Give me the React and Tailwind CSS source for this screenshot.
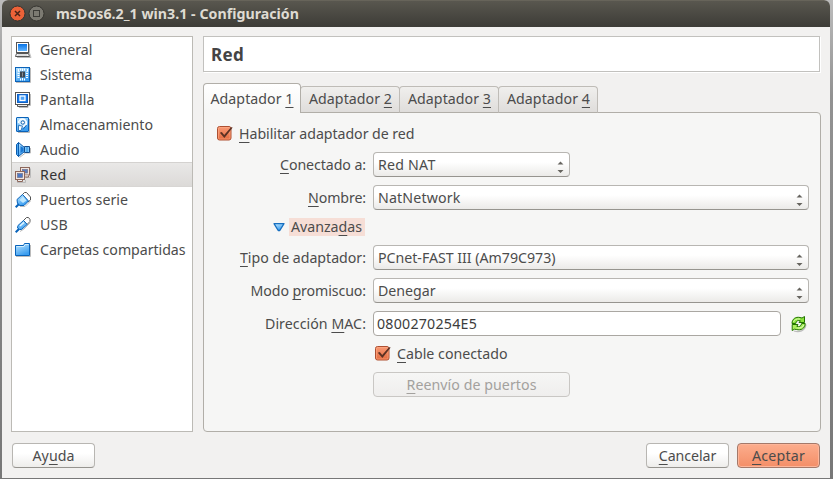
import { useLayoutEffect, useRef, useState } from "react";

/* Text set to a fixed advance width: the spacing is derived from its natural width. */
function Text({ w, className = "", children }) {
  const ref = useRef(null);
  const [spacing, setSpacing] = useState(0);
  useLayoutEffect(() => {
    const el = ref.current;
    const natural = el.getBoundingClientRect().width;
    setSpacing((w - natural) / el.textContent.length);
  }, [w]);
  return (
    <span ref={ref} className={`inline-block shrink-0 whitespace-pre ${className}`} style={{ letterSpacing: `${spacing}px` }}>
      {children}
    </span>
  );
}

/* Mnemonic letter */
function M({ children }) {
  return (
    <span className="underline decoration-1 underline-offset-[3px] [text-decoration-skip-ink:none]">{children}</span>
  );
}

function Svg({ children, className = "" }) {
  return (
    <svg viewBox="0 0 16 16" className={`h-4 w-4 shrink-0 overflow-visible ${className}`}>
      {children}
    </svg>
  );
}

const icons = {
  general: (
    <Svg>
      <path d="M14.500 2v9l1.500 4.500H2" stroke="#bbb" fill="none" />
      <rect x="1.500" y="0.500" width="12" height="10" fill="#fff" stroke="#555" />
      <rect x="3" y="2" width="9" height="7" fill="url(#screen)" />
      <path d="M1.500 11.500h12l1 3h-14z" fill="#fff" stroke="#555" />
      <path d="M2.500 13h10" stroke="#bbb" />
    </Svg>
  ),
  sistema: (
    <Svg>
      <path d="M1 15.500h14.500V1" stroke="#bbb" fill="none" />
      <rect x="0.500" y="0.500" width="14" height="14" fill="url(#blue)" stroke="#0b62b8" />
      <path d="M3.500 2v2.500h1M5.500 1.500v2M7.500 1.500v2.500M9.500 1.500v2M12.500 2v2.500h-1M2.500 6.500h2M2.500 8.500h2M2.500 10.500h2M11 6.500h2M11 8.500h2M11 10.500h2M5.500 11.500v2M7.500 11v2.500M9.500 11.500v2" stroke="#fff" fill="none" />
      <rect x="5" y="4.500" width="5" height="6" fill="#3b4751" />
      <path d="M7.500 5.500v4" stroke="#8a8f94" />
    </Svg>
  ),
  pantalla: (
    <Svg>
      <path d="M15.500 2v11.500h-2.500v2H4" stroke="#bbb" fill="none" />
      <rect x="0.500" y="0.500" width="14" height="12" fill="#fff" stroke="#555" />
      <rect x="2.500" y="2.500" width="10" height="8" fill="#1479eb" stroke="#1262c4" />
      <rect x="5" y="4" width="5" height="4.500" fill="#4ea4f8" stroke="#fff" strokeWidth="1.300" />
      <path d="M2.500 13v1.500h10V13" fill="#eee" stroke="#555" />
    </Svg>
  ),
  almacenamiento: (
    <Svg>
      <path d="M3 15.500h11.500V2" stroke="#bbb" fill="none" />
      <rect x="1.500" y="0.500" width="12" height="14" rx=".5" fill="url(#blue)" stroke="#0b62b8" />
      <path d="M3.500 6a4 4 0 1 1 8 0c0 2.500-2 3.500-4.500 4" fill="#d5eefe" stroke="#fff" strokeWidth="1.400" />
      <circle cx="7.800" cy="5.500" r="1.700" fill="#fff" stroke="#1262b0" />
      <path d="M3.500 8.500l4 .5-1.500 4.500H3.500z" fill="#fff" stroke="#1262b0" strokeWidth=".8" />
      <path d="M11.500 8L8 12.500" stroke="#1262b0" />
    </Svg>
  ),
  audio: (
    <Svg>
      <path d="M4.500 15.500l6-4.500h5V6" stroke="#bbb" fill="none" />
      <path d="M1.500 2.500l2-2v14l-2-2z" fill="#4aa8f4" stroke="#0b5bac" />
      <path d="M3.500 .5L9.500 5.500v4l-6 5z" fill="url(#blue)" stroke="#0b5bac" />
      <path d="M5.500 4v7l3-2V6z" fill="#1976d2" />
      <path d="M9.500 4.500h5v6h-5z" fill="#7cc8fb" stroke="#164f8f" />
      <path d="M12 5v5" stroke="#2788de" />
    </Svg>
  ),
  red: (
    <Svg>
      <path d="M11 10.500h4.500V1.500M2 15.500h8.500V13" stroke="#bbb" fill="none" />
      <rect x="5.500" y=".5" width="9" height="7.500" fill="#f1e6e0" stroke="#8d675b" />
      <rect x="7.500" y="2.500" width="5" height="3.500" fill="#5c7fc0" stroke="#6d718e" strokeWidth=".7" />
      <path d="M9 8.500v1.500h4.500V8.500" fill="#eee" stroke="#8d675b" />
      <rect x=".5" y="4.500" width="9" height="8" fill="#f1e6e0" stroke="#8d675b" />
      <rect x="2.500" y="6.500" width="5" height="4" fill="#4c78c4" stroke="#6d718e" strokeWidth=".7" />
      <path d="M2.500 13v1.500h5V13" fill="#eee" stroke="#8d675b" />
    </Svg>
  ),
  serie: (
    <Svg>
      <path d="M5 14.500h5l5.500-5.500" stroke="#bbb" fill="none" />
      <path d="M7.500 2.500l2-2h2l4 4.500v3L13 10z" fill="#fff" stroke="#555" />
      <path d="M2 7.500L7.500 2.500l6 6.500-4.500 4.500H4.500L2.500 11.500z" fill="url(#blue)" stroke="#0863ba" />
      <path d="M4.500 8l3.500-3.500 3.500 4-3.500 2.500z" fill="#bfe7fe" />
      <path d="M.7 15.300L4 12" stroke="#0863ba" strokeWidth="2" />
    </Svg>
  ),
  usb: (
    <Svg>
      <path d="M5 14.500l4-2.500 6.500-6.500" stroke="#bbb" fill="none" />
      <path d="M8.500 3.500l3-3h2l1.500 2v2L12 7.500z" fill="#fff" stroke="#555" />
      <path d="M3 8.500L8.500 3.500l3.700 4-5.700 5H4.500L2.500 11z" fill="url(#blue)" stroke="#0863ba" />
      <path d="M5 9l4-3.500" stroke="#e2f5ff" strokeWidth="1.300" />
      <path d="M.7 15.300L4 12" stroke="#0863ba" strokeWidth="2" />
    </Svg>
  ),
  carpetas: (
    <Svg>
      <path d="M1 14.500h14.500V3" stroke="#bbb" fill="none" />
      <path d="M.5 3.500h8l1-2h5v12H.5z" fill="url(#blue)" stroke="#0863ba" />
      <path d="M1.500 4.500h7.500l1-2H13.500" stroke="#d2eeff" fill="none" />
    </Svg>
  ),
};

const sections = [
  ["General", 52.5, "general"],
  ["Sistema", 52.5, "sistema"],
  ["Pantalla", 54.5, "pantalla"],
  ["Almacenamiento", 113, "almacenamiento"],
  ["Audio", 39.5, "audio"],
  ["Red", 26.5, "red"],
  ["Puertos serie", 88, "serie"],
  ["USB", 28, "usb"],
  ["Carpetas compartidas", 145.5, "carpetas"],
];

function Checkbox() {
  return (
    <Svg>
      <rect x=".5" y=".5" width="13.500" height="13.500" rx="2" fill="url(#check)" stroke="#ad5032" />
      <rect x="1.500" y="1.500" width="11.500" height="11.500" rx="1" fill="none" stroke="#ffab87" strokeOpacity=".6" />
      <path d="M2.800 6.700l2-.7 2.400 3L14 1.200l1.700.4L7.400 12z" fill="#5b3123" />
    </Svg>
  );
}

function Combo({ label, w, wide }) {
  return (
    <div className={`flex h-[25px] shrink-0 items-center justify-between rounded-[4px] border border-[#b8b6b2] border-b-[#96948f] bg-linear-to-b from-white from-40% to-[#ebeae8] pr-[5px] pl-1 ${wide ? "w-[436px]" : "w-[197px]"}`}>
      <Text w={w}>{label}</Text>
      <svg viewBox="0 0 7 12" className="mt-[5px] h-3 w-[7px]" fill="#66645f">
        <path d="M.5 3.500L3.500 .5l3 3zM.5 9h6L3.500 12z" />
      </svg>
    </div>
  );
}

function Row({ label, w, children, className = "" }) {
  return (
    <div className={`flex h-[25px] items-center ${className}`}>
      <div className="mr-[7px] flex w-[162px] shrink-0 justify-end">
        <Text w={w}>{label}</Text>
      </div>
      {children}
    </div>
  );
}

function Button({ children, w, primary }) {
  return (
    <button
      className={`flex h-[25px] w-[83px] items-center justify-center rounded-[4px] border ${
        primary
          ? "border-[#a4796a] bg-linear-to-b from-[#fcad8d] to-[#f38e67] shadow-[inset_0_0_0_1px_#fdb599]"
          : "border-[#b8b6b2] border-b-[#96948f] bg-linear-to-b from-white from-40% to-[#eeedeb]"
      }`}
    >
      <Text w={w}>{children}</Text>
    </button>
  );
}

function Tab({ n }) {
  return (
    <div className="-ml-px flex h-[27px] w-[100px] items-center justify-center rounded-t-[4px] border border-[#bfbcb7] border-b-[#b1aea8] bg-linear-to-b from-[#f0efed] to-[#dfdddb] pb-px pl-px">
      <Text w={83}>Adaptador <M>{n}</M></Text>
    </div>
  );
}

export default function App() {
  return (
    <div className="h-[479px] w-[833px] overflow-hidden bg-linear-to-b from-[#bcbcbc] via-[#929292] via-20% to-[#777] pr-[3px] pb-px pl-[2px] font-['Noto_Sans',sans-serif] text-[14.2px] leading-[20px] text-[#4c4c4c]">
      <svg className="absolute h-0 w-0">
        <defs>
          <linearGradient id="blue" x2=".5" y2="1"><stop stopColor="#c2e9ff" /><stop offset="1" stopColor="#3a9df0" /></linearGradient>
          <linearGradient id="screen" x2="0" y2="1"><stop stopColor="#0873e6" /><stop offset="1" stopColor="#61b5ff" /></linearGradient>
          <linearGradient id="check" x2="0" y2="1"><stop stopColor="#f99b76" /><stop offset="1" stopColor="#e36b3f" /></linearGradient>
        </defs>
      </svg>
      <div className="flex h-[478px] w-[828px] flex-col overflow-hidden rounded-t-[6px] bg-[#f2f1f0]">
        <header className="flex h-[27px] shrink-0 items-center border-t border-[#67645a] bg-linear-to-b from-[#59574f] to-[#3d3c37] pl-[7px] text-[#dfdbd2]">
          <svg viewBox="0 0 36 18" className="mr-[11px] h-[18px] w-9">
            <circle cx="8.500" cy="8.500" r="7.500" fill="#ec6238" stroke="#35342f" />
            <path d="M6 6l5 5M11 6l-5 5" stroke="#4a2418" strokeWidth="1.500" />
            <circle cx="27.500" cy="8.500" r="7.500" fill="#7c7a72" stroke="#35342f" />
            <rect x="24.500" y="5.500" width="6" height="6" fill="none" stroke="#3c3b37" />
          </svg>
          <Text w={243} className="font-bold">msDos6.2_1 win3.1 - Configuración</Text>
        </header>

        <main className="flex h-[405px] shrink-0 pt-[9px] pl-[9px]">
          <nav className="mr-[10px] h-[396px] w-[182px] shrink-0 border border-[#bcbab5] bg-white">
            {sections.map(([name, w, icon]) => (
              <div
                key={name}
                className={`flex h-[25px] items-center gap-[9px] pl-[3px] ${
                  name === "Red" ? "border-y border-t-[#d4d2d0] border-b-[#d8d6d4] bg-linear-to-b from-[#e9e8e7] to-[#dcdad8] text-[#333]" : ""
                }`}
              >
                {icons[icon]}
                <Text w={w}>{name}</Text>
              </div>
            ))}
          </nav>

          <section className="w-[618px]">
            <h1 className="flex h-9 w-[617px] items-center border border-[#c2c1be] bg-white pt-[2px] pl-[7px] text-[17px] font-bold text-[#444] shadow-[1px_1px_0_#fff]">
              <Text w={33}>Red</Text>
            </h1>

            <div className="mt-[11px] flex h-[29px] items-end">
              <div className="z-10 -mb-px flex h-[30px] w-[98px] items-center justify-center rounded-t-[4px] border border-b-0 border-[#b1aea8] bg-linear-to-b from-white to-[#f6f6f5]">
                <Text w={83}>Adaptador <M>1</M></Text>
              </div>
              <div className="-mb-px flex">
                <Tab n="2" />
                <Tab n="3" />
                <Tab n="4" />
              </div>
            </div>

            <div className="h-[320px] rounded-b-[4px] rounded-tr-[4px] border border-[#b1aea8] bg-[#f6f6f5] pt-[12px]">
              <div className="flex h-[18px] items-center gap-[6px] pl-[13px]">
                <Checkbox />
                <Text w={175.500}><M>H</M>abilitar adaptador de red</Text>
              </div>
              <Row label={<><M>C</M>onectado a:</>} w={86} className="mt-[9px]">
                <Combo label="Red NAT" w={57.500} />
              </Row>
              <Row label={<><M>N</M>ombre:</>} w={58} className="mt-[8px]">
                <Combo label="NatNetwork" w={82.500} wide />
              </Row>
              <div className="mt-[8px] flex h-[18px] items-center pl-[69px]">
                <svg viewBox="0 0 12 9" className="mr-[4px] h-[9px] w-3">
                  <path d="M1 .7h10L6.800 7.500H5.200z" fill="url(#blue)" stroke="#176fc0" strokeWidth="1.300" strokeLinejoin="round" />
                </svg>
                <div className="flex h-[18px] w-[76px] items-center bg-[#f6ded6] pl-[2px]">
                  <Text w={71}>Avanza<M>d</M>as</Text>
                </div>
              </div>
              <Row label={<><M>T</M>ipo de adaptador:</>} w={126} className="mt-[9px]">
                <Combo label="PCnet-FAST III (Am79C973)" w={177.500} wide />
              </Row>
              <Row label={<>Modo <M>p</M>romiscuo:</>} w={115.500} className="mt-[8px]">
                <Combo label="Denegar" w={57.500} wide />
              </Row>
              <Row label={<>Dirección <M>M</M>AC:</>} w={101} className="mt-[8px]">
                <div className="flex h-[25px] w-[408px] items-center rounded-[4px] border border-[#aaa7a2] bg-white pl-[3px] text-[#3c3c3c]">
                  <Text w={100}>0800270254E5</Text>
                </div>
                <Svg className="ml-[10px]">
                  <path d="M3 15c5 1.500 11 .5 12-6.500" stroke="#bbb" fill="none" strokeWidth="1.300" />
                  <path d="M1 7.500C1 3 4.500 .5 9 1.500l2 .5L13.500 .5V6.500H8L9.500 4.800C7 4 5 5 4.700 7.500z" fill="#8be33d" stroke="#237500" />
                  <path d="M14.200 7.500c0 5-4 7.200-9 6l-1.700-.3L1.200 14.500V8.500H7L5.800 10.300c2.200 1 4.500 0 4.800-2.800z" fill="#a9ef5e" stroke="#237500" />
                  <path d="M2.500 6C3 3.800 5.500 2.500 9 3M12.700 9c-.6 2-3 3.300-6 3" stroke="#dcfcb5" fill="none" />
                </Svg>
              </Row>
              <div className="mt-[9px] flex h-[18px] items-center gap-[6px] pl-[171px]">
                <Checkbox />
                <Text w={110.500}><M>C</M>able conectado</Text>
              </div>
              <div className="mt-[9px] ml-[169px] flex h-[25px] w-[197px] items-center justify-center rounded-[4px] border border-[#c9c7c4] bg-linear-to-b from-[#f6f6f5] to-[#efeeed] text-[#a3a19e]">
                <Text w={130}><M>R</M>eenvío de puertos</Text>
              </div>
            </div>
          </section>
        </main>

        <footer className="mt-[11px] flex pl-[10px]">
          <Button w={42}>Ay<M>u</M>da</Button>
          <div className="ml-[551px] flex gap-2">
            <Button w={57.500}><M>C</M>ancelar</Button>
            <Button w={53} primary><M>A</M>ceptar</Button>
          </div>
        </footer>
      </div>
    </div>
  );
}
